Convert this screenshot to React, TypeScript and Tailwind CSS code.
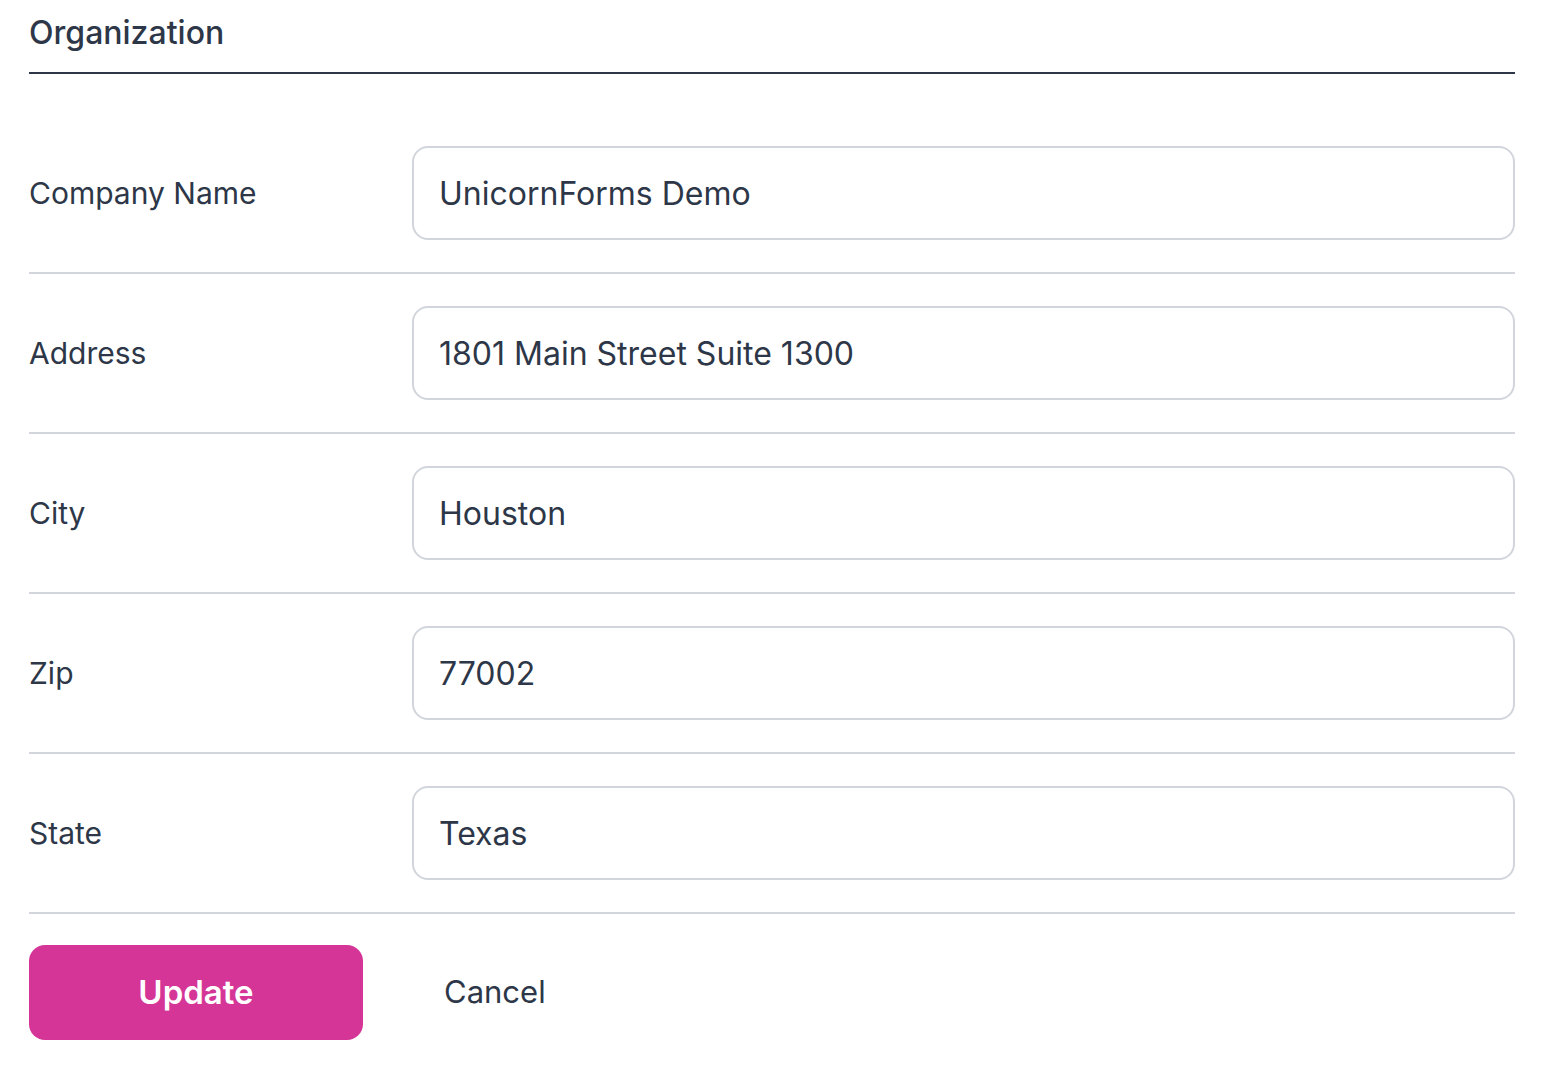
import React from 'react';

const fields = [
  { label: 'Company Name', value: 'UnicornForms Demo' },
  { label: 'Address', value: '1801 Main Street Suite 1300' },
  { label: 'City', value: 'Houston' },
  { label: 'Zip', value: '77002' },
  { label: 'State', value: 'Texas' },
];

const App: React.FC = () => {
  return (
    <div className="min-h-screen bg-white font-['Inter',sans-serif] text-[#2d3748]">
      <div className="pl-[29px] pr-[37px]">
        <div className="pt-[9px] pb-[15px] border-b-2 border-[#2d3748]">
          <h2 className="text-[32px] leading-[48px] font-medium">Organization</h2>
        </div>

        <form className="mt-[40px]" onSubmit={(e) => e.preventDefault()}>
          {fields.map((field) => (
            <div
              key={field.label}
              className="flex items-center py-[32px] border-b-2 border-[#d2d6dc]"
            >
              <label className="w-[383px] shrink-0 text-[30px] leading-[40px]">
                {field.label}
              </label>
              <input
                type="text"
                defaultValue={field.value}
                className="flex-1 h-[94px] px-[25px] rounded-[16px] border-2 border-[#d2d6dc] bg-white text-[32px] text-[#2d3748] outline-none"
              />
            </div>
          ))}

          <div className="flex items-center pt-[31px]">
            <button
              type="submit"
              className="w-[334px] h-[95px] rounded-[16px] bg-[#d53597] text-white text-[33px] font-semibold"
            >
              Update
            </button>
            <button type="button" className="ml-[48px] px-[33px] h-[95px] text-[31px] text-[#2d3748]">
              Cancel
            </button>
          </div>
        </form>
      </div>
    </div>
  );
};

export default App;
